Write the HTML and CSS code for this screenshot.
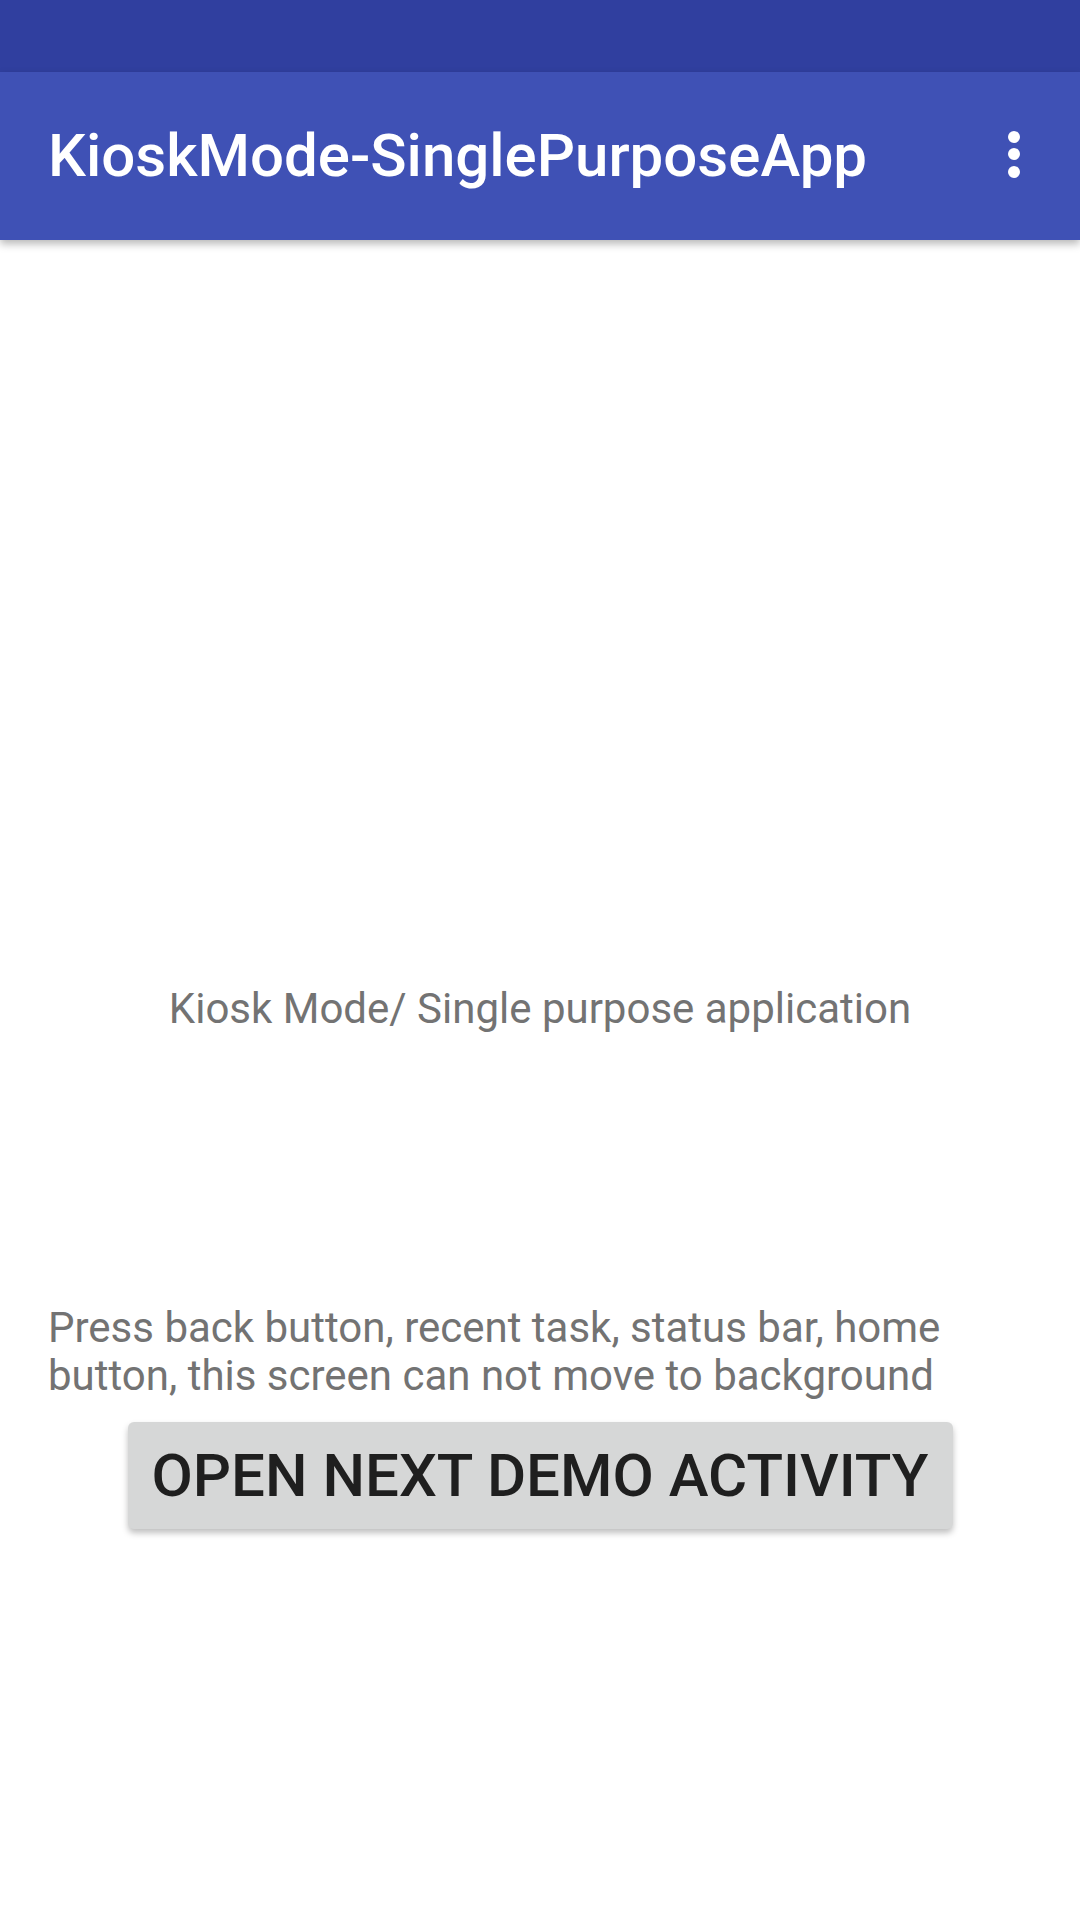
FILE: index.html
```html
<!DOCTYPE html>
<html>
<head>
<meta charset="utf-8">
<link rel="stylesheet" href="styles.css">
</head>
<body>
<div class="screen">
  <div class="status"></div>
  <header class="appbar">
    <h1 class="title">KioskMode-SinglePurposeApp</h1>
    <div class="overflow">
      <span class="dot"></span><span class="dot"></span><span class="dot"></span>
    </div>
  </header>
  <main class="content">
    <p class="center-text">Kiosk Mode/ Single purpose application</p>
    <p class="info">Press back button, recent task, status bar, home button, this screen can not move to background</p>
    <div class="btn-row">
      <button class="btn">OPEN NEXT DEMO ACTIVITY</button>
    </div>
  </main>
</div>
</body>
</html>
```
FILE: styles.css
```css
html, body {
  margin: 0;
  padding: 0;
  background: #ffffff;
}
body {
  font-family: Roboto, "Noto Sans", "Liberation Sans", sans-serif;
}
.screen {
  width: 1080px;
  height: 1920px;
  display: flex;
  flex-direction: column;
  overflow: hidden;
  background: #ffffff;
}
.status {
  height: 72px;
  background: #303f9f;
  flex: none;
}
.appbar {
  height: 168px;
  flex: none;
  background: #3f51b5;
  display: flex;
  align-items: center;
  justify-content: space-between;
  padding: 0 60px 0 48px;
  box-shadow: 0 4px 8px rgba(0, 0, 0, 0.28);
  position: relative;
  z-index: 1;
}
.title {
  margin: 0;
  color: #ffffff;
  font-weight: 500;
  font-size: 60px;
  line-height: 1;
}
.overflow {
  display: flex;
  flex-direction: column;
  align-items: center;
  gap: 5.5px;
  margin-bottom: 4px;
}
.dot {
  width: 12px;
  height: 12px;
  border-radius: 50%;
  background: #ffffff;
}
.content {
  display: flex;
  flex-direction: column;
}
.center-text {
  margin: 745px 0 0 0;
  text-align: center;
  color: #737373;
  font-size: 42px;
  line-height: 48px;
}
.info {
  margin: 271px 0 0 0;
  padding: 0 48px;
  color: #737373;
  font-size: 42px;
  line-height: 48px;
}
.btn-row {
  display: flex;
  justify-content: center;
  margin-top: 22px;
}
.btn {
  width: 825px;
  height: 107px;
  border: none;
  border-radius: 6px;
  background: #d6d7d7;
  color: #1f1f1f;
  font-family: Roboto, "Noto Sans", "Liberation Sans", sans-serif;
  font-weight: 500;
  font-size: 60px;
  padding: 0;
  box-shadow: 0 4px 6px rgba(0, 0, 0, 0.25);
}
```
